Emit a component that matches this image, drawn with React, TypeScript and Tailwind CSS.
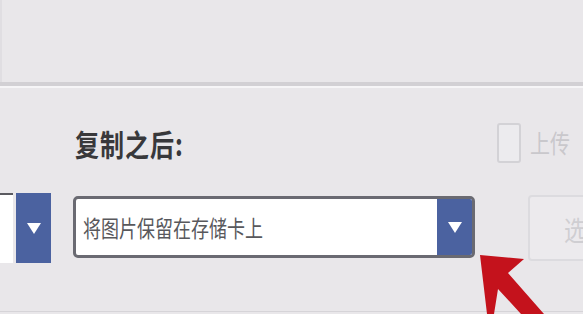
import React from 'react'

const FONT = '"Noto Sans CJK SC", "Noto Sans", sans-serif'

function BlueCaret({ className = '' }: { className?: string }) {
  return (
    <div className={`flex shrink-0 items-center justify-center bg-[#4b62a0] ${className}`}>
      <svg width="14" height="11" viewBox="0 0 14 11" aria-hidden>
        <path d="M0 0 H14 L7 11 Z" fill="#ffffff" />
      </svg>
    </div>
  )
}

function Arrow() {
  return (
    <svg
      className="pointer-events-none absolute left-0 top-0"
      width="583"
      height="314"
      viewBox="0 0 583 314"
      aria-hidden
    >
      <path
        d="M480 255 L524 259 L508 273 L544 314 L521 314 L498 289 L494 314 L487 314 Z"
        fill="#c4121c"
      />
    </svg>
  )
}

export default function App() {
  return (
    <div
      className="relative h-[314px] w-[583px] overflow-hidden bg-[#e9e7ea]"
      style={{ fontFamily: FONT }}
    >
      <div className="h-[82px] border-l-2 border-[#e0dee2]" />
      <div className="h-[4px] bg-[#d2d0d4]" />
      <div className="h-[2px] bg-[#f6f5f7]" />

      <div className="flex h-[224px] items-start border-b border-[#d6d4d8]">
        {/* cut-off dropdown on the left */}
        <div className="mt-[105px] flex h-[70px] w-[51px] shrink-0">
          <div className="h-full w-[13px] border-t-2 border-[#5a5a60] bg-white" />
          <BlueCaret className="ml-[3px] h-full w-[35px]" />
        </div>

        {/* main column */}
        <div className="ml-[22px] flex w-[402px] shrink-0 flex-col">
          <div className="mt-[36px] flex h-[38px] items-center pl-[2px]">
            <span className="inline-block origin-left scale-y-125 text-[24px] font-bold leading-none tracking-[1px] text-[#38383b]">
              复制之后:
            </span>
          </div>
          <div className="mt-[34px] flex h-[62px] overflow-hidden rounded-[5px] border-[3px] border-[#6a6a72] bg-white">
            <div className="flex flex-1 items-center pl-[7px]">
              <span className="inline-block scale-y-125 text-[18px] leading-none text-[#58585c]">
                将图片保留在存储卡上
              </span>
            </div>
            <BlueCaret className="h-full w-[35px]" />
          </div>
        </div>

        {/* right column, faded */}
        <div className="ml-[22px] flex shrink-0 flex-col">
          <div className="mt-[35px] flex h-[40px] items-center">
            <div className="h-[40px] w-[24px] rounded-[3px] border-2 border-[#d3d2d6] bg-[#ecebee]" />
            <span className="ml-[9px] inline-block scale-y-125 text-[20px] leading-none text-[#c9c8cc]">
              上传
            </span>
          </div>
          <div className="ml-[31px] mt-[32px] flex h-[66px] w-[70px] items-center rounded-[4px] border-2 border-[#dcdbdf] bg-[#eceaed] pl-[34px]">
            <span className="inline-block scale-y-125 text-[22px] leading-none text-[#cfced2]">
              选
            </span>
          </div>
        </div>
      </div>

      <Arrow />
    </div>
  )
}
